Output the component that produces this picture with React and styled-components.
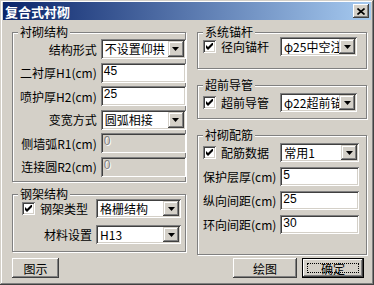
import React from "react";
import styled, { createGlobalStyle } from "styled-components";

const FACE = "#d4d0c8";

const GlobalStyle = createGlobalStyle`
  html, body {
    margin: 0;
    padding: 0;
    background: ${FACE};
  }
  body {
    font-family: "SimSun", "Noto Sans CJK SC", sans-serif;
    font-size: 12px;
    color: #000;
  }
`;

const raised = `
  box-shadow: inset -1px -1px #404040, inset 1px 1px #fff,
    inset -2px -2px #808080, inset 2px 2px ${FACE};
`;

const sunken = `
  box-shadow: inset 1px 1px #808080, inset -1px -1px #fff,
    inset 2px 2px #404040, inset -2px -2px ${FACE};
`;

const Window = styled.div`
  width: 374px;
  height: 285px;
  box-sizing: border-box;
  padding: 2px 3px 3px 3px;
  background: ${FACE};
  box-shadow: inset -1px -1px #404040, inset 1px 1px ${FACE},
    inset -2px -2px #808080, inset 2px 2px #fff;
  display: flex;
  flex-direction: column;
`;

const TitleBar = styled.div`
  height: 18px;
  display: flex;
  align-items: center;
  justify-content: space-between;
  padding: 0 2px 0 2px;
  background: linear-gradient(to right, #0a246a, #a6caf0);
`;

const TitleText = styled.span`
  color: #fff;
  font-weight: bold;
  font-size: 13px;
`;

const CloseButton = styled.span`
  width: 16px;
  height: 14px;
  box-sizing: border-box;
  background: ${FACE};
  ${raised}
  display: flex;
  align-items: center;
  justify-content: center;
`;

const Body = styled.div`
  padding: 12px 5px 0 9px;
  display: flex;
  flex-direction: column;
`;

const Columns = styled.div`
  display: grid;
  grid-template-columns: 174px 170px;
  column-gap: 11px;
  align-items: start;
`;

const Column = styled.div`
  display: flex;
  flex-direction: column;
  gap: ${(p) => p.$gap}px;
`;

const Group = styled.div`
  position: relative;
  box-sizing: border-box;
  height: ${(p) => p.$h}px;
  border: 1px solid #808080;
  box-shadow: inset 1px 1px #fff, 1px 1px #fff;
  padding: ${(p) => p.$pad};
`;

const Legend = styled.span`
  position: absolute;
  top: -8px;
  left: 5px;
  padding: 0 2px;
  line-height: 14px;
  background: ${FACE};
`;

const Form = styled.div`
  display: grid;
  grid-template-columns: 1fr ${(p) => p.$ctl}px;
  grid-auto-rows: ${(p) => p.$row || 19}px;
  column-gap: 4px;
  row-gap: ${(p) => p.$gap}px;
  align-items: center;
`;

const Label = styled.span`
  display: flex;
  align-items: center;
  justify-content: ${(p) => (p.$left ? "flex-start" : "flex-end")};
  gap: 5px;
  white-space: nowrap;
`;

const Field = styled.div`
  box-sizing: border-box;
  height: 100%;
  padding: 2px;
  display: flex;
  align-items: stretch;
  background: ${(p) => (p.$disabled ? FACE : "#fff")};
  ${sunken}
`;

const FieldText = styled.span`
  flex: 1;
  min-width: 0;
  overflow: hidden;
  white-space: nowrap;
  padding-left: ${(p) => (p.$num ? 1 : 2)}px;
  line-height: ${(p) => (p.$num ? 13 : 15)}px;
  font-family: ${(p) =>
    p.$num ? `"Liberation Sans", sans-serif` : `"SimSun", "Noto Sans CJK SC", sans-serif`};
  color: ${(p) => (p.$disabled ? "#808080" : "#000")};
  text-shadow: ${(p) => (p.$disabled ? "1px 1px #fff" : "none")};
`;

const DropButton = styled.span`
  width: 16px;
  flex: none;
  box-sizing: border-box;
  background: ${FACE};
  box-shadow: inset -1px -1px #404040, inset 1px 1px ${FACE},
    inset -2px -2px #808080, inset 2px 2px #fff;
  display: flex;
  align-items: center;
  justify-content: center;
`;

const CheckBox = styled.span`
  width: 13px;
  height: 13px;
  box-sizing: border-box;
  flex: none;
  background: #fff;
  ${sunken}
  display: flex;
  align-items: center;
  justify-content: center;
`;

const Footer = styled.div`
  margin-top: 3px;
  margin-right: 2px;
  display: flex;
  justify-content: space-between;
`;

const ButtonRow = styled.div`
  display: flex;
  gap: 5px;
`;

const Button = styled.div`
  width: ${(p) => p.$w}px;
  height: 20px;
  box-sizing: border-box;
  display: flex;
  align-items: center;
  justify-content: center;
  padding: ${(p) => (p.$default ? "4px" : "0")};
  ${(p) =>
    p.$default
      ? `border: 1px solid #000;
         box-shadow: inset -1px -1px #404040, inset 1px 1px #fff, inset -2px -2px #808080, inset 2px 2px ${FACE};`
      : raised}
`;

const FocusRing = styled.span`
  flex: 1;
  align-self: stretch;
  border: 1px dotted #000;
  display: flex;
  align-items: center;
  justify-content: center;
`;

const Arrow = () => (
  <svg width="7" height="4" viewBox="0 0 7 4">
    <polygon points="0,0 7,0 3.5,4" fill="#000" />
  </svg>
);

const Tick = () => (
  <svg width="7" height="7" viewBox="0 0 7 7">
    <polygon points="0,2 2,4 7,-1 7,2 2,7 0,5" fill="#000" />
  </svg>
);

const Combo = ({ value }) => (
  <Field>
    <FieldText>{value}</FieldText>
    <DropButton>
      <Arrow />
    </DropButton>
  </Field>
);

const TextBox = ({ value, disabled }) => (
  <Field $disabled={disabled}>
    <FieldText $num $disabled={disabled}>
      {value}
    </FieldText>
  </Field>
);

const Checked = ({ children }) => (
  <Label $left>
    <CheckBox>
      <Tick />
    </CheckBox>
    {children}
  </Label>
);

const App = () => {
  return (
    <>
      <GlobalStyle />
      <Window>
        <TitleBar>
          <TitleText>复合式衬砌</TitleText>
          <CloseButton>
            <svg width="8" height="7" viewBox="0 0 8 7">
              <path d="M0.5 0.5 L7.5 6.5 M7.5 0.5 L0.5 6.5" stroke="#000" strokeWidth="1.6" />
            </svg>
          </CloseButton>
        </TitleBar>
        <Body>
          <Columns>
            <Column $gap={12}>
              <Group $h={150} $pad="6px 4px 0 7px">
                <Legend>衬砌结构</Legend>
                <Form $ctl={85} $row={20} $gap={3.6}>
                  <Label>结构形式</Label>
                  <Combo value="不设置仰拱" />
                  <Label>二衬厚H1(cm)</Label>
                  <TextBox value="45" />
                  <Label>喷护厚H2(cm)</Label>
                  <TextBox value="25" />
                  <Label>变宽方式</Label>
                  <Combo value="圆弧相接" />
                  <Label>侧墙弧R1(cm)</Label>
                  <TextBox value="0" disabled />
                  <Label>连接圆R2(cm)</Label>
                  <TextBox value="0" disabled />
                </Form>
              </Group>
              <Group $h={58} $pad="4px 4px 0 9px">
                <Legend>钢架结构</Legend>
                <Form $ctl={85} $gap={7}>
                  <Checked>钢架类型</Checked>
                  <Combo value="格栅结构" />
                  <Label>材料设置</Label>
                  <Combo value="H13" />
                </Form>
              </Group>
            </Column>
            <Column $gap={16}>
              <Group $h={37} $pad="4px 9px 0 5px">
                <Legend>系统锚杆</Legend>
                <Form $ctl={77} $gap={0}>
                  <Checked>径向锚杆</Checked>
                  <Combo value="φ25中空注" />
                </Form>
              </Group>
              <Group $h={34} $pad="7px 9px 0 5px">
                <Legend>超前导管</Legend>
                <Form $ctl={77} $gap={0}>
                  <Checked>超前导管</Checked>
                  <Combo value="φ22超前锚" />
                </Form>
              </Group>
              <Group $h={120} $pad="7px 8px 0 5px">
                <Legend>衬砌配筋</Legend>
                <Form $ctl={79} $gap={5}>
                  <Checked>配筋数据</Checked>
                  <Combo value="常用1" />
                  <Label $left>保护层厚(cm)</Label>
                  <TextBox value="5" />
                  <Label $left>纵向间距(cm)</Label>
                  <TextBox value="25" />
                  <Label $left>环向间距(cm)</Label>
                  <TextBox value="30" />
                </Form>
              </Group>
            </Column>
          </Columns>
          <Footer>
            <Button $w={47}>图示</Button>
            <ButtonRow>
              <Button $w={64}>绘图</Button>
              <Button $w={62} $default>
                <FocusRing>确定</FocusRing>
              </Button>
            </ButtonRow>
          </Footer>
        </Body>
      </Window>
    </>
  );
};

export default App;
